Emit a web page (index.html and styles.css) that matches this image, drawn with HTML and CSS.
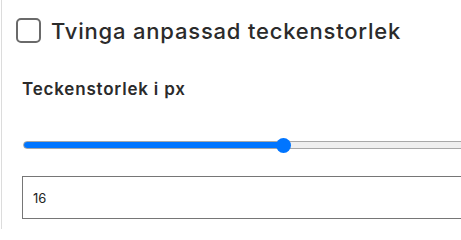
FILE: index.html
```html
<!DOCTYPE html>
<html lang="sv">
<head>
<meta charset="utf-8">
<link rel="stylesheet" href="styles.css">
</head>
<body>
<div class="page">
  <div class="edge"></div>
  <div class="panel">
    <label class="force">
      <input type="checkbox" class="check">
      <span class="force-text">Tvinga anpassad teckenstorlek</span>
    </label>
    <div class="field">
      <div class="field-label">Teckenstorlek i px</div>
      <input type="range" class="slider" min="8" max="24" value="16">
      <input type="text" class="size-input" value="16">
    </div>
  </div>
</div>
</body>
</html>
```
FILE: styles.css
```css
html, body {
  margin: 0;
  padding: 0;
  background: #fff;
  overflow: hidden;
}
.page {
  display: flex;
  width: 700px;
  height: 229px;
  font-family: Inter, "Noto Sans", sans-serif;
  color: #2b2b2b;
}
.edge {
  width: 1px;
  margin-left: 1px;
  background: #dcdcdc;
}
.panel {
  flex: 1;
  display: flex;
  flex-direction: column;
  padding: 18px 0 0 14px;
}
.force {
  display: flex;
  align-items: center;
  gap: 10px;
  height: 25px;
}
.check {
  -webkit-appearance: none;
  appearance: none;
  margin: 0;
  width: 25px;
  height: 25px;
  border: 2px solid #6a6a6a;
  border-radius: 5px;
  box-sizing: border-box;
  background: #fff;
}
.force-text {
  font-size: 22px;
  font-weight: 500;
  letter-spacing: 0.8px;
}
.field {
  display: flex;
  flex-direction: column;
  padding-left: 6px;
  margin-top: 36px;
}
.field-label {
  font-size: 17px;
  font-weight: 600;
  line-height: 20px;
  letter-spacing: 0.8px;
}
.slider {
  -webkit-appearance: none;
  appearance: none;
  margin: 42px 0 0 1px;
  width: 521px;
  height: 8px;
  border-radius: 4px;
  border: 1px solid #a8a8a8;
  box-sizing: border-box;
  background: linear-gradient(to right, #0075ff 0, #0075ff 260px, #efefef 260px);
}
.slider::-webkit-slider-thumb {
  -webkit-appearance: none;
  width: 15px;
  height: 15px;
  border-radius: 50%;
  background: #0075ff;
  border: none;
}
.size-input {
  margin-top: 27px;
  width: 600px;
  height: 43px;
  box-sizing: border-box;
  border: 1px solid #767676;
  padding: 0 10px;
  font-family: Inter, "Noto Sans", sans-serif;
  font-size: 13px;
  color: #222;
  outline: none;
}
```
